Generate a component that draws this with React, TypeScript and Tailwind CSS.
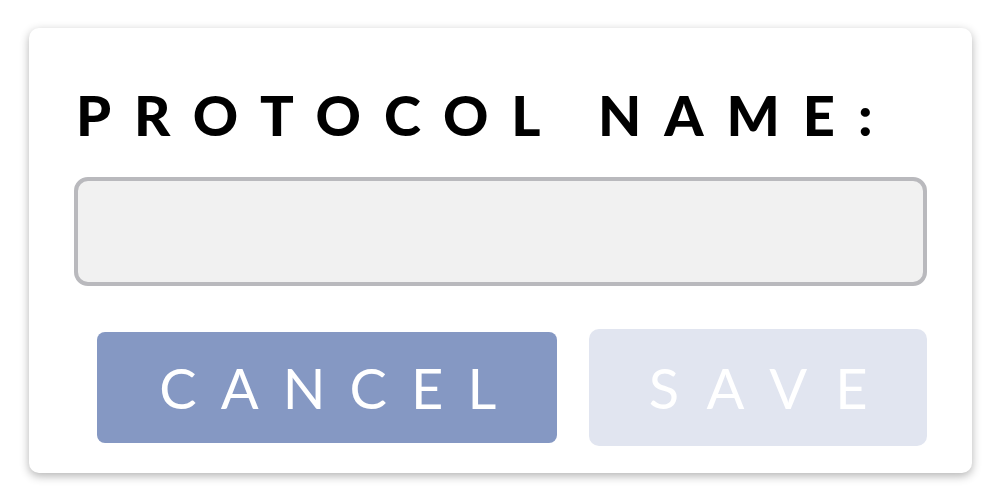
export default function App() {
  return (
    <div className="w-[1003px] h-[503px] bg-white pt-[28px] pl-[29px]" style={{ fontFamily: 'Lato, "Open Sans", sans-serif' }}>
      <div className="w-[943px] h-[445px] bg-white rounded-[10px] shadow-[0_3px_10px_rgba(0,0,0,0.3)] px-[45px] pt-[59px]">
        <h1 className="text-[56px] leading-[56px] font-black tracking-[0.41em] text-black pl-[2px] whitespace-nowrap">PROTOCOL NAME:</h1>
        <input
          type="text"
          className="mt-[34px] block w-[853px] h-[109px] bg-[#f1f1f1] border-[4px] border-[#b9b9bd] rounded-[14px] outline-none"
        />
        <div className="flex items-center mt-[43px]">
          <button className="ml-[23px] w-[461px] h-[111px] bg-[#8598c3] rounded-[8px] text-white text-[56px] tracking-[0.43em] pl-[0.45em] font-normal">
            CANCEL
          </button>
          <button className="ml-[32px] w-[338px] h-[117px] bg-[#e1e5f0] rounded-[10px] text-white text-[56px] tracking-[0.5em] pl-[0.5em] font-normal">
            SAVE
          </button>
        </div>
      </div>
    </div>
  )
}
